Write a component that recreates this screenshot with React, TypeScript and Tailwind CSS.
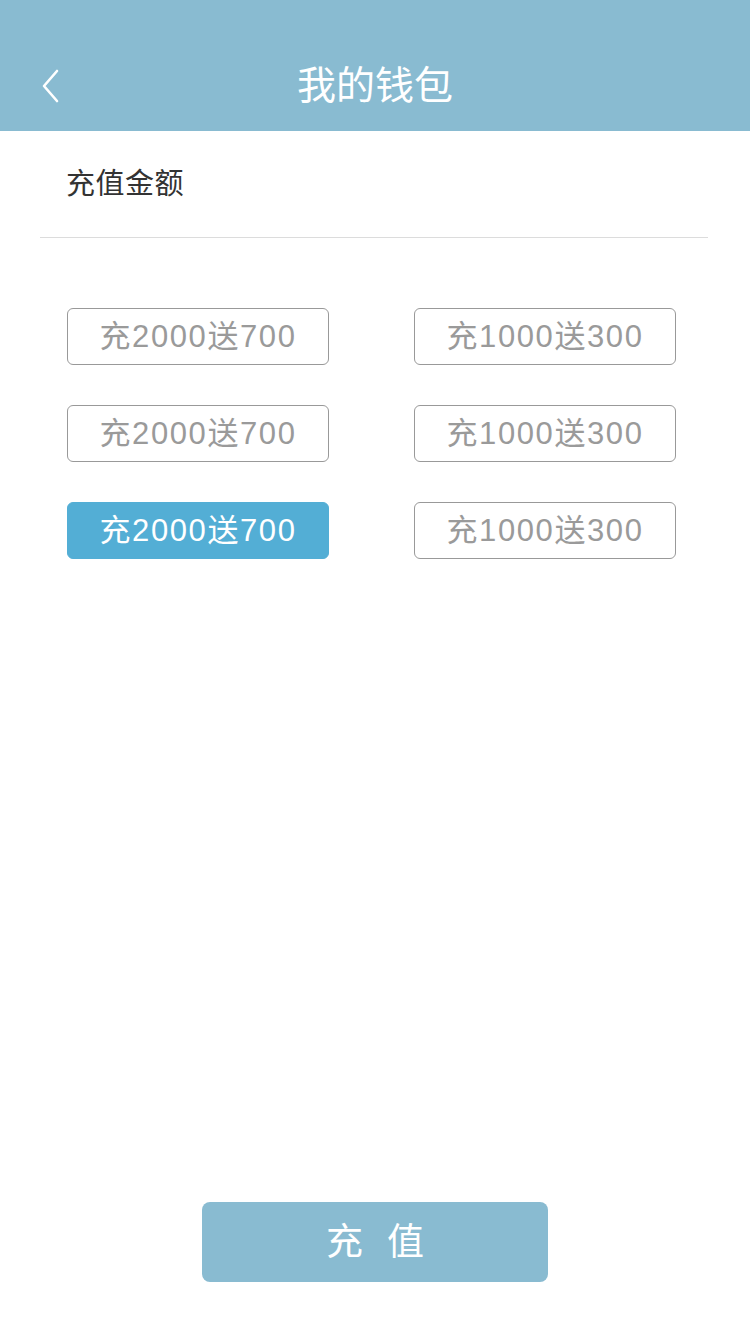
import { useState } from "react";

const options = [
    "充2000送700",
    "充1000送300",
    "充2000送700",
    "充1000送300",
    "充2000送700",
    "充1000送300",
];

const font = "font-['Liberation_Sans','Noto_Sans_CJK_SC',sans-serif]";

export default function App() {
    const [selected, setSelected] = useState(4);

    return (
        <div className={`w-[750px] h-[1334px] bg-white flex flex-col ${font}`}>
            {/* header */}
            <div className="h-[131px] bg-[#89bbd1] pt-[40px] shrink-0">
                <div className="relative h-[91px] flex items-center justify-center">
                    <button className="absolute left-[36px] top-[25px] p-1">
                        <svg width="20" height="34" viewBox="0 0 20 34" fill="none">
                            <path d="M17 2 L4 17 L17 32" stroke="white" strokeWidth="2.6" strokeLinecap="round" strokeLinejoin="round" />
                        </svg>
                    </button>
                    <h1 className="text-[39px] text-white leading-none">我的钱包</h1>
                </div>
            </div>

            {/* amount label */}
            <div className="ml-[40px] mr-[42px] h-[107px] border-b border-[#dcdcdc] flex items-center pl-[26px]">
                <span className="text-[29px] text-[#333] leading-none tracking-[0.5px]">充值金额</span>
            </div>

            {/* options */}
            <div className="grid grid-cols-[262px_262px] gap-x-[85px] gap-y-[40px] pl-[67px] pt-[70px]">
                {options.map((label, i) => (
                    <button
                        key={i}
                        onClick={() => setSelected(i)}
                        className={
                            i === selected
                                ? "h-[57px] rounded-[6px] bg-[#53aed5] border border-[#53aed5] text-white text-[31px] leading-none tracking-[1.6px] flex items-center justify-center"
                                : "h-[57px] rounded-[6px] border border-[#999] text-[#9a9a9a] text-[31px] leading-none tracking-[1.6px] flex items-center justify-center"
                        }
                    >
                        {label}
                    </button>
                ))}
            </div>

            <div className="flex-1" />

            {/* submit */}
            <div className="flex justify-center pb-[52px]">
                <button className="w-[346px] h-[80px] rounded-[8px] bg-[#89bbd1] text-white text-[37px] leading-none tracking-[24px] pl-[24px]">
                    充值
                </button>
            </div>
        </div>
    );
}
